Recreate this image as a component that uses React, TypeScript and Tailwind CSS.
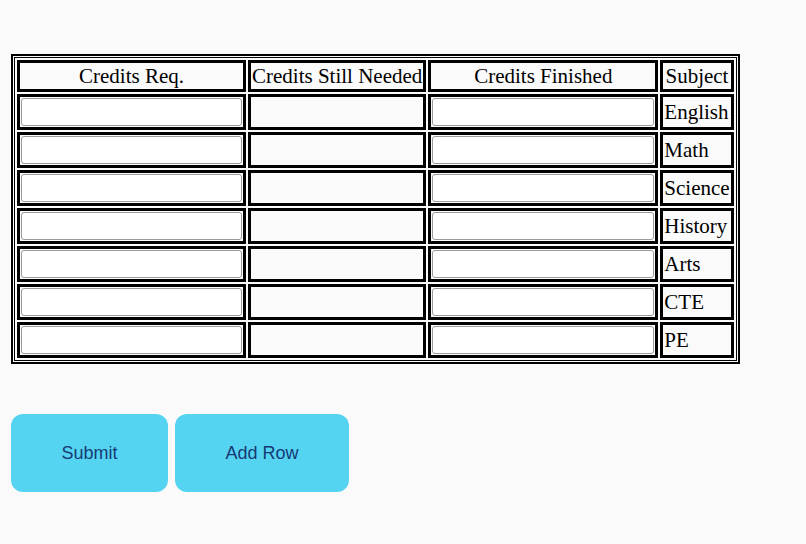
import React from "react";

const SUBJECTS = ["English", "Math", "Science", "History", "Arts", "CTE", "PE"];

const cell = "border-[3px] border-solid border-black p-px align-middle";

export default function App() {
  return (
    <div className="min-h-[544px] bg-[#fafafa] pl-[11px] pt-[54px] font-['Liberation_Serif',serif] text-[21px] leading-[24px] text-black">
      {/* Credits table: thick outer line, thin inner line */}
      <div className="inline-block border-[2px] border-black p-px">
        <table className="border-separate border-spacing-[2px] border border-black">
          <thead>
            <tr>
              <th className={`${cell} w-[229px] text-center font-normal`}>Credits Req.</th>
              <th className={`${cell} w-[177px] whitespace-nowrap text-center font-normal`}>Credits Still Needed</th>
              <th className={`${cell} w-[230px] text-center font-normal`}>Credits Finished</th>
              <th className={`${cell} w-[72px] text-center font-normal`}>Subject</th>
            </tr>
          </thead>
          <tbody>
            {SUBJECTS.map((s) => (
              <tr key={s}>
                <td className={cell}>
                  <input className="block h-[28px] w-full rounded-[3px] border border-[#9a9a9a] bg-white px-1 text-[14px] outline-none" />
                </td>
                <td className={`${cell} h-[36px]`}></td>
                <td className={cell}>
                  <input className="block h-[28px] w-full rounded-[3px] border border-[#9a9a9a] bg-white px-1 text-[14px] outline-none" />
                </td>
                <td className={`${cell} whitespace-nowrap text-left`}>{s}</td>
              </tr>
            ))}
          </tbody>
        </table>
      </div>

      {/* Actions */}
      <div className="mt-[45px] flex gap-[7px] font-['Liberation_Sans',Arial,sans-serif] text-[18px] text-[#163a75]">
        <button className="h-[78px] rounded-[12px] bg-[#55d4f2] px-[50.5px]">Submit</button>
        <button className="h-[78px] rounded-[12px] bg-[#55d4f2] px-[50.5px]">Add Row</button>
      </div>
    </div>
  );
}
